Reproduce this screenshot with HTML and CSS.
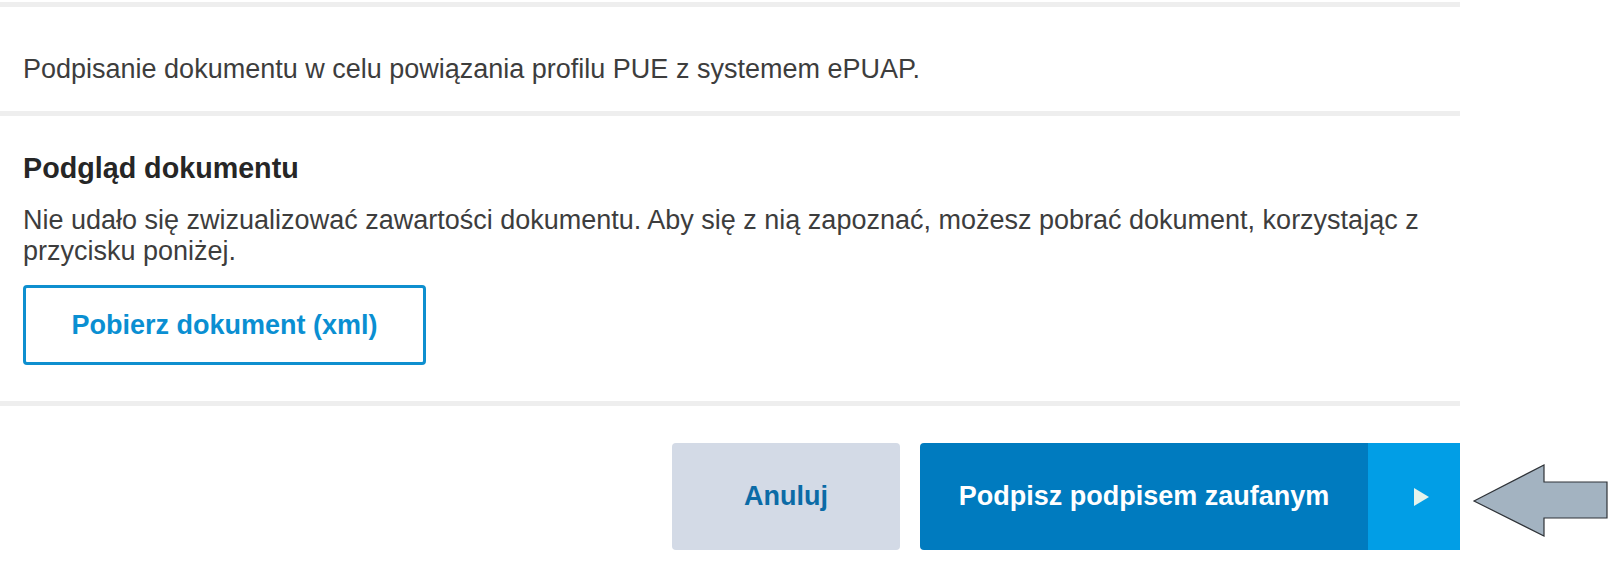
FILE: index.html
```html
<!DOCTYPE html>
<html lang="pl">
<head>
<meta charset="utf-8">
<title>Podpisanie dokumentu</title>
<link rel="stylesheet" href="styles.css">
</head>
<body>
<div class="page">
  <div class="sep sep-top"></div>
  <section class="intro">
    <p class="text">Podpisanie dokumentu w celu powiązania profilu PUE z systemem ePUAP.</p>
  </section>
  <div class="sep"></div>
  <section class="preview">
    <h2 class="title">Podgląd dokumentu</h2>
    <p class="text">Nie udało się zwizualizować zawartości dokumentu. Aby się z nią zapoznać, możesz pobrać dokument, korzystając z przycisku poniżej.</p>
    <button class="btn-outline" type="button">Pobierz dokument (xml)</button>
  </section>
  <div class="sep"></div>
  <div class="actions">
    <button class="btn-cancel" type="button">Anuluj</button>
    <button class="btn-sign" type="button">
      <span class="sign-label">Podpisz podpisem zaufanym</span>
      <span class="sign-toggle"><span class="tri"></span></span>
    </button>
  </div>
</div>
<svg class="pointer" width="140" height="80" viewBox="0 0 140 80" aria-hidden="true">
  <polygon points="4,39 74,3 74,20 137,20 137,56 74,56 74,74" fill="#a3b3c1" stroke="#2f3338" stroke-width="1.2" stroke-linejoin="miter"/>
</svg>
</body>
</html>
```
FILE: styles.css
```css
html, body {
  margin: 0;
  padding: 0;
  background: #ffffff;
}
body {
  font-family: "Liberation Sans", Arial, Helvetica, sans-serif;
  color: #333333;
  position: relative;
  width: 1612px;
  height: 580px;
  overflow: hidden;
}
.page {
  width: 1460px;
  padding-top: 2px;
  display: flex;
  flex-direction: column;
}
.sep {
  height: 5px;
  background: #eeeeee;
}
.intro {
  padding: 47px 23px 26px;
}
.text {
  margin: 0;
  font-size: 27px;
  line-height: 31px;
  color: #3d3d3d;
}
.preview {
  padding: 36px 23px 36px;
  display: flex;
  flex-direction: column;
  align-items: flex-start;
}
.title {
  margin: 0 0 21px;
  font-size: 28.7px;
  line-height: 32px;
  font-weight: bold;
  color: #262626;
}
.btn-outline {
  margin-top: 18px;
  width: 403px;
  height: 80px;
  border: 3px solid #0e8fcf;
  border-radius: 4px;
  background: #ffffff;
  color: #0a8fd2;
  font-family: inherit;
  font-size: 27px;
  font-weight: bold;
  padding: 0;
}
.actions {
  display: flex;
  justify-content: flex-end;
  gap: 20px;
  padding-top: 37px;
}
.btn-cancel {
  width: 228px;
  height: 107px;
  border: none;
  border-radius: 4px;
  background: #d3dae6;
  color: #0b6ba6;
  font-family: inherit;
  font-size: 27px;
  font-weight: bold;
  padding: 0;
}
.btn-sign {
  display: flex;
  height: 107px;
  border: none;
  padding: 0;
  background: transparent;
  font-family: inherit;
  border-radius: 4px 0 0 4px;
  overflow: hidden;
}
.sign-label {
  width: 448px;
  display: flex;
  align-items: center;
  justify-content: center;
  background: #007bbf;
  color: #ffffff;
  font-size: 27px;
  font-weight: bold;
}
.sign-toggle {
  width: 92px;
  display: flex;
  align-items: center;
  justify-content: center;
  background: #019ee6;
}
.tri {
  width: 0;
  height: 0;
  border-top: 9px solid transparent;
  border-bottom: 9px solid transparent;
  border-left: 15px solid #e4f3ec;
  margin-left: 14px;
}
.pointer {
  position: absolute;
  left: 1470px;
  top: 462px;
}
```
